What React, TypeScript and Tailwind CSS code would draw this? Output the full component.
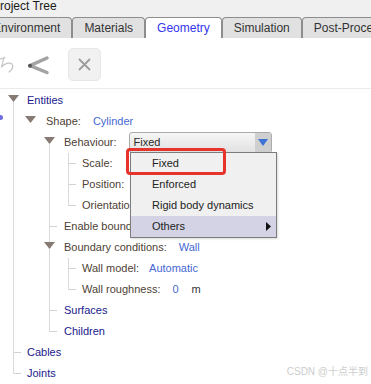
import React from "react";

const LINE = "bg-[#dadada]";

function Tri({ above = false, below = false }: { above?: boolean; below?: boolean }) {
  return (
    <div className="w-[11px] shrink-0 self-stretch flex flex-col items-center">
      <div className={"h-[5px] w-px " + (above ? LINE : "")} />
      <svg width="11" height="7" viewBox="0 0 11 7" className="block shrink-0">
        <polygon points="0,0 11,0 5.5,7" fill="#877973" />
      </svg>
      <div className={"flex-1 w-px " + (below ? LINE : "")} />
    </div>
  );
}

function Full({ w }: { w: string }) {
  return (
    <div className={"shrink-0 self-stretch flex " + w}>
      <div className={"w-px h-full " + LINE} />
    </div>
  );
}

function Conn({ half = false }: { half?: boolean }) {
  return (
    <div className="w-[8px] shrink-0 self-stretch flex">
      <div className="w-px h-full flex flex-col">
        <div className={"h-[11px] w-px " + LINE} />
        <div className={"flex-1 w-px " + (half ? "" : LINE)} />
      </div>
      <div className="self-center w-[7px] h-px bg-[#d2d2d2]" />
    </div>
  );
}

const Row = ({ children }: { children: React.ReactNode }) => (
  <div className="flex items-center h-[21px] whitespace-nowrap">{children}</div>
);

const LABEL = "text-[#4e3f35]";
const VALUE = "text-[#4567d2]";
const NODE = "text-[#20208c]";

export default function App() {
  return (
    <div className="relative w-[371px] h-[384px] overflow-hidden bg-white font-['Liberation_Sans',Arial,sans-serif]">
      {/* title */}
      <div className="h-[15px] bg-[#f0f0f0] overflow-hidden">
        <div className="-ml-[8px] text-[12px] leading-[13px] text-[#1a1a1a]">Project Tree</div>
      </div>
      {/* tabs */}
      <div className="h-[23px] bg-[#f0f0f0] flex items-end overflow-hidden">
        <div className="flex items-end -ml-[19px] text-[12px]">
          {["Environment", "Materials", "Geometry", "Simulation", "Post-Processing"].map((t) =>
            t === "Geometry" ? (
              <div
                key={t}
                className="h-[21px] px-[11px] flex items-center rounded-t-[4px] border border-b-0 border-[#8d8d8d] bg-white text-[#3434ee] shrink-0"
              >
                {t}
              </div>
            ) : (
              <div
                key={t}
                className="h-[21px] px-[11px] flex items-center rounded-t-[4px] border border-b-0 border-[#8d8d8d] bg-[#e1e1e1] text-[#333] shrink-0"
              >
                {t}
              </div>
            )
          )}
        </div>
      </div>
      {/* toolbar */}
      <div className="h-[51px] border-b border-[#ebebeb] flex items-start pt-[10px]">
        <svg width="16" height="33" viewBox="0 0 16 33" className="shrink-0">
          <path
            d="M-1 11 L5 10 M4 9 Q3 14 1.5 19 Q7 13.5 12 16 Q14.5 20 9 24"
            fill="none"
            stroke="#c4c4c4"
            strokeWidth="1.2"
            strokeLinecap="round"
            strokeLinejoin="round"
          />
        </svg>
        <svg width="24" height="33" viewBox="0 0 24 33" className="shrink-0 ml-[10px]">
          <polyline points="21,10 4,17.7 21,24.5" fill="none" stroke="#a3a3a3" strokeWidth="3.5" strokeLinecap="round" strokeLinejoin="round" />
          <circle cx="4" cy="17.7" r="2" fill="#555" />
        </svg>
        <div className="ml-[18px] w-[33px] h-[33px] rounded-[5px] bg-[#f1f1f1] border border-[#e6e6e6] flex items-center justify-center shrink-0">
          <svg width="13" height="13" viewBox="0 0 13 13">
            <path d="M1 1 L12 12 M12 1 L1 12" stroke="#9c9c9c" strokeWidth="1.8" />
          </svg>
        </div>
      </div>
      {/* tree */}
      <div className="pt-[1px] text-[11px]">
        <Row>
          <div className="w-[8px] shrink-0" />
          <Tri below />
          <span className={"ml-[8px] " + NODE}>Entities</span>
        </Row>
        <Row>
          <div className="w-[13px] shrink-0" />
          <Full w="w-[12px]" />
          <Tri />
          <span className={"ml-[10px] " + LABEL}>Shape:</span>
          <span className={"ml-[12px] " + VALUE}>Cylinder</span>
        </Row>
        <Row>
          <div className="w-[13px] shrink-0" />
          <Full w="w-[31px]" />
          <Tri below />
          <span className={"ml-[9px] " + LABEL}>Behaviour:</span>
          <div className="ml-[12px] w-[143px] h-[21px] rounded-[3px] border border-[#ababab] bg-linear-to-b from-[#f6f6f6] to-[#e2e2e2] flex items-center overflow-hidden shrink-0">
            <span className="flex-1 pl-[4px] text-[#2a2a2a]">Fixed</span>
            <div className="w-[16px] h-full bg-[#cfcfcf] flex items-center justify-center">
              <svg width="10" height="7" viewBox="0 0 10 7">
                <polygon points="0,0 10,0 5,7" fill="#3d72d6" />
              </svg>
            </div>
          </div>
        </Row>
        <Row>
          <div className="w-[13px] shrink-0" />
          <Full w="w-[36px]" />
          <Full w="w-[19px]" />
          <Conn />
          <span className={"ml-[6px] " + LABEL}>Scale:</span>
        </Row>
        <Row>
          <div className="w-[13px] shrink-0" />
          <Full w="w-[36px]" />
          <Full w="w-[19px]" />
          <Conn />
          <span className={"ml-[6px] " + LABEL}>Position:</span>
        </Row>
        <Row>
          <div className="w-[13px] shrink-0" />
          <Full w="w-[36px]" />
          <Full w="w-[19px]" />
          <Conn half />
          <span className={"ml-[6px] " + LABEL}>Orientation:</span>
        </Row>
        <Row>
          <div className="w-[13px] shrink-0" />
          <Full w="w-[36px]" />
          <Conn />
          <span className={"ml-[7px] " + LABEL}>Enable boundary conditions</span>
        </Row>
        <Row>
          <div className="w-[13px] shrink-0" />
          <Full w="w-[31px]" />
          <Tri above below />
          <span className={"ml-[9px] " + LABEL}>Boundary conditions:</span>
          <span className={"ml-[12px] " + VALUE}>Wall</span>
        </Row>
        <Row>
          <div className="w-[13px] shrink-0" />
          <Full w="w-[36px]" />
          <Full w="w-[19px]" />
          <Conn />
          <span className={"ml-[6px] " + LABEL}>Wall model:</span>
          <span className={"ml-[10px] " + VALUE}>Automatic</span>
        </Row>
        <Row>
          <div className="w-[13px] shrink-0" />
          <Full w="w-[36px]" />
          <Full w="w-[19px]" />
          <Conn half />
          <span className={"ml-[6px] " + LABEL}>Wall roughness:</span>
          <span className={"ml-[12px] " + VALUE}>0</span>
          <span className="ml-[13px] text-[#333]">m</span>
        </Row>
        <Row>
          <div className="w-[13px] shrink-0" />
          <Full w="w-[36px]" />
          <Conn />
          <span className={"ml-[7px] " + NODE}>Surfaces</span>
        </Row>
        <Row>
          <div className="w-[13px] shrink-0" />
          <Full w="w-[36px]" />
          <Conn half />
          <span className={"ml-[7px] " + NODE}>Children</span>
        </Row>
        <Row>
          <div className="w-[13px] shrink-0" />
          <Conn />
          <span className={"ml-[6px] " + NODE}>Cables</span>
        </Row>
        <Row>
          <div className="w-[13px] shrink-0" />
          <Conn half />
          <span className={"ml-[6px] " + NODE}>Joints</span>
        </Row>
      </div>

      {/* side dot */}
      <div className="absolute left-[-2px] top-[115px] w-[5px] h-[5px] rounded-full bg-[#6f6ee0]" />

      {/* dropdown menu */}
      <div className="absolute left-[130px] top-[152px] w-[147px] border border-[#7c7c7c] bg-[#f0f0f0] text-[11px] text-[#222] shadow-[1px_1px_2px_rgba(0,0,0,0.15)]">
        <div className="h-[21px] pl-[21px] flex items-center">Fixed</div>
        <div className="h-[21px] pl-[21px] flex items-center">Enforced</div>
        <div className="h-[21px] pl-[21px] flex items-center">Rigid body dynamics</div>
        <div className="h-[21px] pl-[21px] pr-[5px] flex items-center justify-between bg-[#d3d3e5]">
          <span>Others</span>
          <svg width="5" height="9" viewBox="0 0 5 9">
            <polygon points="0,0 5,4.5 0,9" fill="#111" />
          </svg>
        </div>
      </div>

      {/* red highlight */}
      <div className="absolute left-[126px] top-[148px] w-[100px] h-[27px] border-[3px] border-[#e6332c] rounded-[4px]" />

      {/* watermark */}
      <div className="absolute right-[3px] top-[366px] text-[10px] leading-[12px] text-[#cdcdcd] font-['Liberation_Sans','Noto_Sans_CJK_SC',sans-serif] whitespace-nowrap">
        CSDN @十点半到
      </div>
    </div>
  );
}
